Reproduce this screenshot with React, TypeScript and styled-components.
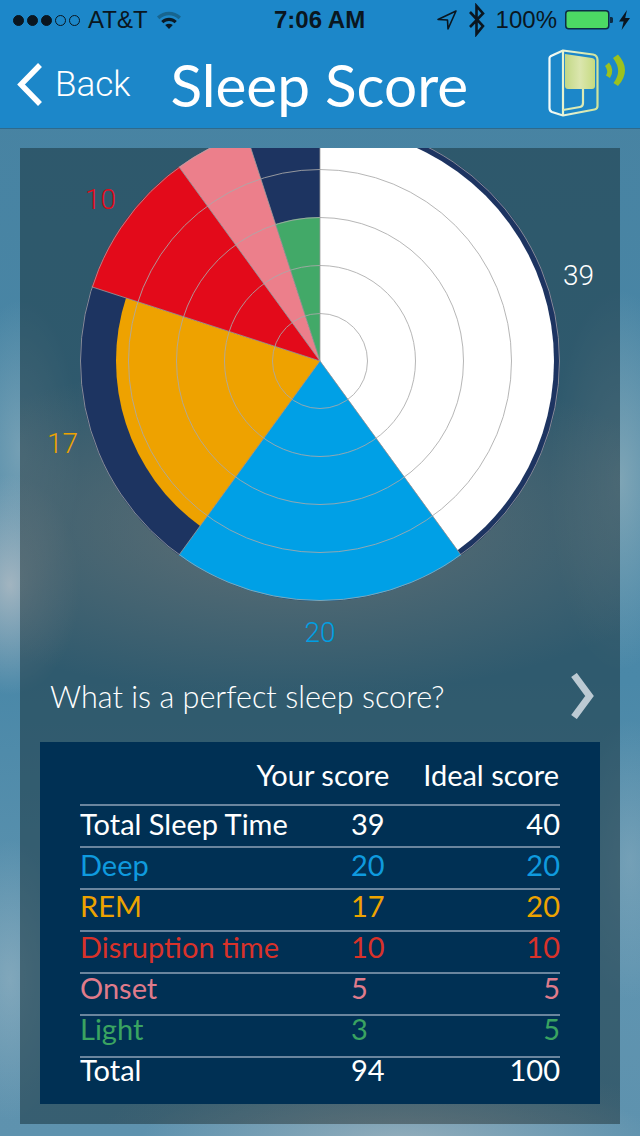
import styled, { createGlobalStyle } from "styled-components";

const GlobalStyle = createGlobalStyle`
  html, body {
    margin: 0;
    padding: 0;
    background: #4a86a6;
  }
  * {
    box-sizing: border-box;
  }
`;

const COLORS = {
  white: "#ffffff",
  deep: "#00a0e6",
  rem: "#eea200",
  disruption: "#e30a1a",
  onset: "#ec7f8b",
  light: "#42a968",
};

const segments = [
  { score: 39, ideal: 40, color: COLORS.white },
  { score: 20, ideal: 20, color: COLORS.deep },
  { score: 17, ideal: 20, color: COLORS.rem },
  { score: 10, ideal: 10, color: COLORS.disruption },
  { score: 5, ideal: 5, color: COLORS.onset },
  { score: 3, ideal: 5, color: COLORS.light },
];

// top: the reference's text creeps up a little inside each row
const rows = [
  { name: "Total Sleep Time", score: 39, ideal: 40, color: "#ffffff", top: 6 },
  { name: "Deep", score: 20, ideal: 20, color: "#0f9ade", top: 5 },
  { name: "REM", score: 17, ideal: 20, color: "#eda300", top: 4 },
  { name: "Disruption time", score: 10, ideal: 10, color: "#d9322a", top: 3 },
  { name: "Onset", score: 5, ideal: 5, color: "#df7b8b", top: 2 },
  { name: "Light", score: 3, ideal: 5, color: "#3aa361", top: 1 },
  { name: "Total", score: 94, ideal: 100, color: "#ffffff", top: 0 },
];

const CX = 300;
const CY = 213;
const R = 240;

const polar = (r: number, deg: number) => {
  const a = (deg * Math.PI) / 180;
  return [CX + r * Math.sin(a), CY - r * Math.cos(a)];
};

const sector = (r: number, from: number, to: number) => {
  const [x1, y1] = polar(r, from);
  const [x2, y2] = polar(r, to);
  const large = to - from > 180 ? 1 : 0;
  return `M${CX} ${CY}L${x1} ${y1}A${r} ${r} 0 ${large} 1 ${x2} ${y2}Z`;
};

const Chart = () => {
  let angle = 0;
  const slices = segments.map((s) => {
    const from = angle;
    angle += s.ideal * 3.6;
    return { ...s, from, to: angle, r: (s.score / s.ideal) * R };
  });

  return (
    <svg width="600" height="520" viewBox="0 0 600 520">
      <circle cx={CX} cy={CY} r={R} fill="#1d3461" />
      {slices.map((s) => (
        <path key={s.from} d={sector(s.r, s.from, s.to)} fill={s.color} />
      ))}
      {[48, 96, 144, 192, 240].map((r) => (
        <circle
          key={r}
          cx={CX}
          cy={CY}
          r={r - 0.5}
          fill="none"
          stroke="#a9a9a9"
          strokeOpacity={r === 240 ? 0.75 : 0.85}
          strokeWidth="1"
        />
      ))}
      {slices.map((s) => {
        const [x, y] = polar(R, s.from);
        return (
          <line
            key={s.from}
            x1={CX}
            y1={CY}
            x2={x}
            y2={y}
            stroke="#9c9c9c"
            strokeOpacity="0.8"
            strokeWidth="1"
          />
        );
      })}
    </svg>
  );
};

const WifiIcon = () => (
  <svg width="26" height="22" viewBox="0 0 26 22">
    <path d="M1 7.5C8 1 18 1 25 7.5L22.6 10.2C17 5 9 5 3.4 10.2Z" fill="#17658f" />
    <path d="M5.2 12C10 7.8 16 7.8 20.8 12L18.6 14.3C15 11.2 11 11.2 7.4 14.3Z" fill="#0b1a24" />
    <path d="M9.2 16C11.5 14.2 14.5 14.2 16.8 16L13 20Z" fill="#0b1a24" />
  </svg>
);

const LocationIcon = () => (
  <svg width="22" height="22" viewBox="0 0 22 22">
    <path d="M20 2L2 10.5L11.5 11L12 20Z" fill="none" stroke="#0a1620" strokeWidth="1.6" strokeLinejoin="round" />
  </svg>
);

const BluetoothIcon = () => (
  <svg width="18" height="34" viewBox="0 0 18 34">
    <path d="M2 9L15 23L8.5 31V3L15 10.5L2 24" fill="none" stroke="#0a1620" strokeWidth="2.6" />
  </svg>
);

const BatteryIcon = () => (
  <svg width="48" height="22" viewBox="0 0 48 22">
    <rect x="0.75" y="1.75" width="43" height="18" rx="3" fill="#4cd964" stroke="#0d2c44" strokeWidth="1.5" />
    <path d="M45 8h1.5a1.5 1.5 0 0 1 1.5 1.5v3a1.5 1.5 0 0 1-1.5 1.5H45Z" fill="#0d2c44" />
  </svg>
);

const BoltIcon = () => (
  <svg width="13" height="22" viewBox="0 0 13 22">
    <path d="M9 1L1 12.5H5.6L3.6 21L12 9H7.2Z" fill="#0a1620" />
  </svg>
);

const BackChevron = () => (
  <svg width="28" height="44" viewBox="0 0 28 44">
    <path d="M24 3L5 22.5L24 42" fill="none" stroke="#ffffff" strokeWidth="5.5" />
  </svg>
);

const NextChevron = () => (
  <svg width="24" height="46" viewBox="0 0 24 46">
    <path d="M4 2L19.5 23L4 44" fill="none" stroke="#bccad3" strokeWidth="7" />
  </svg>
);

// viewBox follows page coordinates of the logo corner
const Logo = () => (
  <svg width="90" height="80" viewBox="540 40 90 80">
    <defs>
      <linearGradient id="screen" x1="0" x2="1" y1="0" y2="0">
        <stop offset="0" stopColor="#c2d885" />
        <stop offset="0.5" stopColor="#dbe6ae" />
        <stop offset="1" stopColor="#c6db80" />
      </linearGradient>
      <linearGradient id="frame" gradientUnits="userSpaceOnUse" x1="549" x2="598" y1="0" y2="0">
        <stop offset="0" stopColor="#f4fbfa" />
        <stop offset="1" stopColor="#cfe39a" />
      </linearGradient>
    </defs>
    <path
      d="M551 56L563 50.500L593 54.500Q597.500 55.500 597.500 60V106Q597.500 109 594.500 109.500L563 115.500L552 112Q549.500 111 549.500 108V58Q549.500 57 551 56Z"
      fill="none"
      stroke="url(#frame)"
      strokeWidth="2.200"
      strokeLinejoin="round"
    />
    <path d="M563 50.500Q563 52 563 56V115" fill="none" stroke="#e6f3cf" strokeWidth="2.200" />
    <path d="M563 110L580 107Q583 106.500 583 103V88" fill="none" stroke="#dcebb4" strokeWidth="2.200" />
    <path d="M565 54L592 58Q595 58.500 595 61V86Q595 89 592 89H568Q565 89 565 86Z" fill="url(#screen)" />
    <path d="M605 66L609 62.500Q615 70 610 78L606 75.500Q609 71 605 66Z" fill="#9cc11e" />
    <path d="M613 58L618 54.500Q632 70 618 86L613.500 83Q623 71 613 58Z" fill="#9cc11e" />
  </svg>
);

const App = () => (
  <Page>
    <GlobalStyle />
    <Header>
      <StatusBar>
        <StatusGroup>
          <Signal>
            {[true, true, true, false, false].map((on, i) => (
              <SignalDot key={i} $on={on} />
            ))}
          </Signal>
          <Carrier>AT&amp;T</Carrier>
          <WifiIcon />
        </StatusGroup>
        <Clock>7:06 AM</Clock>
        <StatusGroup>
          <LocationIcon />
          <BluetoothIcon />
          <Percent>100%</Percent>
          <BatteryGroup>
            <BatteryIcon />
            <BoltIcon />
          </BatteryGroup>
        </StatusGroup>
      </StatusBar>
      <NavBar>
        <BackLink>
          <BackChevron />
          <BackText>Back</BackText>
        </BackLink>
        <Title>Sleep Score</Title>
        <LogoSlot>
          <Logo />
        </LogoSlot>
      </NavBar>
    </Header>
    <Main>
      <Panel>
        <ChartArea>
          <Chart />
          <ChartLabel $x={543} $y={111} $color="#ffffff">39</ChartLabel>
          <ChartLabel $x={300} $y={468} $color="#009fe3" $center>20</ChartLabel>
          <ChartLabel $x={27} $y={279} $color="#eda300">17</ChartLabel>
          <ChartLabel $x={65} $y={35} $color="#e30a1a">10</ChartLabel>
        </ChartArea>
        <PerfectRow>
          <PerfectText>What is a perfect sleep score?</PerfectText>
          <NextChevron />
        </PerfectRow>
        <ScoreCard>
          <HeadRow>
            <HeadCell>Your score</HeadCell>
            <HeadCell>Ideal score</HeadCell>
          </HeadRow>
          {rows.map((r) => (
            <ScoreRow key={r.name} $color={r.color} $top={r.top}>
              <span>{r.name}</span>
              <span>{r.score}</span>
              <IdealCell>{r.ideal}</IdealCell>
            </ScoreRow>
          ))}
        </ScoreCard>
      </Panel>
    </Main>
  </Page>
);

const Page = styled.div`
  width: 640px;
  height: 1136px;
  overflow: hidden;
  display: flex;
  flex-direction: column;
  background:
    radial-gradient(ellipse 70px 110px at 10px 585px, rgba(190, 195, 200, 0.75), transparent),
    radial-gradient(ellipse 60px 150px at 20px 450px, rgba(160, 185, 195, 0.5), transparent),
    radial-gradient(ellipse 70px 190px at 620px 480px, rgba(170, 190, 195, 0.55), transparent),
    radial-gradient(ellipse 260px 60px at 400px 1140px, rgba(180, 190, 195, 0.6), transparent),
    radial-gradient(ellipse 60px 140px at 10px 980px, rgba(170, 190, 200, 0.45), transparent),
    radial-gradient(ellipse 60px 140px at 630px 860px, rgba(170, 190, 200, 0.35), transparent),
    linear-gradient(#4782a1, #4a88a8 60%, #5f94b0 85%, #5e92ae);
`;

const Header = styled.header`
  height: 129px;
  flex-shrink: 0;
  background: #1c87c9;
  border-bottom: 1px solid #2f6a8c;
  display: flex;
  flex-direction: column;
`;

const StatusBar = styled.div`
  height: 40px;
  padding: 0 9px 0 13px;
  position: relative;
  display: flex;
  justify-content: space-between;
  align-items: center;
  color: #0a1620;
  font-family: "Liberation Sans", Arial, sans-serif;
`;

const StatusGroup = styled.div`
  display: flex;
  align-items: center;
  gap: 10px;
`;

const BatteryGroup = styled.div`
  display: flex;
  align-items: center;
  gap: 5px;
  margin-left: -2px;
`;

const Signal = styled.div`
  display: flex;
  gap: 3px;
`;

const SignalDot = styled.i<{ $on: boolean }>`
  width: 11px;
  height: 11px;
  border-radius: 50%;
  border: 1px solid #0a1620;
  background: ${({ $on }) => ($on ? "#0a1620" : "transparent")};
`;

const Carrier = styled.span`
  font-size: 24px;
  margin-left: -2px;
  margin-right: -2px;
`;

const Clock = styled.span`
  position: absolute;
  left: 274px;
  top: 5px;
  font-size: 24px;
  font-weight: 700;
  line-height: 30px;
`;

const Percent = styled.span`
  font-size: 24px;
`;

const NavBar = styled.nav`
  flex: 1;
  position: relative;
  display: flex;
  align-items: center;
  padding-left: 16px;
`;

const BackLink = styled.div`
  display: flex;
  align-items: center;
  gap: 11px;
  color: #ffffff;
`;

const BackText = styled.span`
  font-family: Roboto, "Liberation Sans", sans-serif;
  font-weight: 300;
  font-size: 35px;
`;

const Title = styled.h1`
  margin: 0 0 0 40px;
  color: #ffffff;
  font-family: Lato, sans-serif;
  font-weight: 400;
  font-size: 58.5px;
  line-height: 60px;
  white-space: nowrap;
`;

const LogoSlot = styled.div`
  position: absolute;
  right: 10px;
  top: 0;
`;

const Main = styled.main`
  flex: 1;
  padding: 19px 20px 12px;
  display: flex;
`;

const Panel = styled.section`
  flex: 1;
  display: flex;
  flex-direction: column;
  background:
    radial-gradient(ellipse 420px 170px at 270px 380px, rgba(125, 125, 122, 0.62), transparent),
    radial-gradient(ellipse 300px 70px at 380px 985px, rgba(125, 125, 122, 0.35), transparent),
    rgba(30, 60, 72, 0.6);
`;

const ChartArea = styled.div`
  position: relative;
  height: 520px;
  overflow: hidden;
`;

const ChartLabel = styled.span<{ $x: number; $y: number; $color: string; $center?: boolean }>`
  position: absolute;
  left: ${({ $x }) => $x}px;
  top: ${({ $y }) => $y}px;
  transform: ${({ $center }) => ($center ? "translateX(-50%)" : "none")};
  color: ${({ $color }) => $color};
  font-family: Roboto, sans-serif;
  font-weight: 300;
  font-size: 28px;
  line-height: 34px;
`;

const PerfectRow = styled.div`
  height: 56px;
  margin-bottom: 18px;
  padding: 0 26px 0 30px;
  display: flex;
  justify-content: space-between;
  align-items: center;
`;

const PerfectText = styled.span`
  color: #ffffff;
  font-family: Lato, sans-serif;
  font-weight: 300;
  font-size: 30.6px;
`;

const ScoreCard = styled.div`
  margin: 0 20px;
  padding: 0 40px;
  height: 362px;
  background: #003054;
  font-family: Lato, sans-serif;
`;

const HeadRow = styled.div`
  height: 62px;
  padding: 0 1px 12px 0;
  display: flex;
  justify-content: flex-end;
  align-items: flex-end;
  gap: 34px;
`;

const HeadCell = styled.span`
  color: #ffffff;
  font-size: 29px;
  line-height: 34px;
`;

const ScoreRow = styled.div<{ $color: string; $top: number }>`
  height: 42px;
  padding-top: ${({ $top }) => $top}px;
  display: grid;
  grid-template-columns: 271px 1fr auto;
  align-items: start;
  border-top: 2px solid #6a859e;
  color: ${({ $color }) => $color};
  font-size: 29px;
  line-height: 24px;
`;

const IdealCell = styled.span`
  text-align: right;
`;

export default App;
